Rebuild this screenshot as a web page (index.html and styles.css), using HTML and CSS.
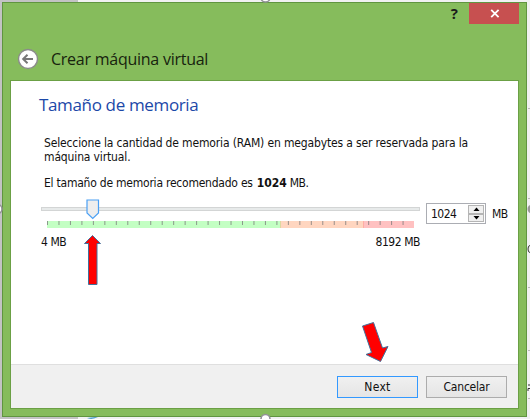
FILE: index.html
```html
<!DOCTYPE html>
<html lang="es">
<head>
<meta charset="utf-8">
<title>Crear máquina virtual</title>
<link rel="stylesheet" href="styles.css">
</head>
<body>
<div class="page-edge"></div>
<div class="window">
  <div class="titlebar"><span class="help">?</span>
    <div class="close"><svg width="10" height="9" viewBox="0 0 10 9"><path d="M1.2 .8 8.6 8.2M8.6 .8 1.2 8.2" stroke="#fff" stroke-width="1.8"/></svg></div>
  </div>
  <div class="header">
    <svg class="back" width="22" height="22" viewBox="0 0 22 22"><circle cx="11" cy="11" r="9.5" fill="#fff" stroke="#8b8b8b" stroke-width="1.4"/><path d="M16 11H6.5M10.5 6.8 6.2 11l4.3 4.2" fill="none" stroke="#777" stroke-width="2"/></svg>
    <span class="title">Crear máquina virtual</span>
  </div>
  <div class="content">
    <div class="pane">
      <h1>Tamaño de memoria</h1>
      <p><span class="l1">Seleccione la cantidad de memoria (RAM) en megabytes a ser reservada para la</span><br><span class="l2">máquina virtual.</span></p>
      <p class="rec"><span class="l3">El tamaño de memoria recomendado es</span> <b>1024</b> <span class="l4">MB.</span></p>
      <div class="controls">
        <div class="slider">
          <div class="track"></div>
          <svg class="handle" width="14" height="21" viewBox="0 0 14 21"><path d="M1 1h11.5v13L6.75 19.5 1 14z" fill="#eee" stroke="#4ba0f4" stroke-width="1.2"/></svg>
          <svg class="scale" width="368" height="7" viewBox="0 0 368 7"><path d="M0 0h234v7H0z" fill="#c3ffc3"/><path d="M233.500 0h83v7h-83z" fill="#ffd6c0"/><path d="M316.500 0H367v7h-50.500z" fill="#ffc1c1"/><path d="M233.500 0v7" stroke="#ddd8a0"/><path d="M316.500 0v7" stroke="#ffaea5"/><path d="M0 2H367" stroke="#777" stroke-opacity=".75" stroke-width="4" stroke-dasharray="1 10.470"/></svg>
          <div class="limits"><span class="min">4 MB</span><span class="max">8192 MB</span></div>
        </div>
        <div class="spin"><span class="value">1024</span>
          <div class="steps"><i><svg width="7" height="4"><path d="M.5 4 3.500 .5 6.500 4z"/></svg></i><i><svg width="7" height="4"><path d="M.5 0 3.500 3.500 6.500 0z"/></svg></i></div>
        </div>
        <span class="unit">MB</span>
      </div>
    </div>
    <div class="footer"><div class="button primary"><span class="next">Next</span></div><div class="button"><span class="cancel">Cancelar</span></div></div>
  </div>
</div>
<svg class="marks" width="530" height="419" viewBox="0 0 530 419">
  <path d="M92.500 235.500 100.500 243.500H97V284.500H88.500V243.500H84.500z" fill="#f00" stroke="#41719c"/>
  <path d="M362.500 326 373.500 322.500 382.500 348 388 346.500 380.500 361.500 366 354.500 371.500 352.500z" fill="#f00" stroke="#41719c"/>
  <g fill="#fff" stroke="#929296" stroke-width="1.600"><circle cx="265.500" cy="-2.500" r="4.500"/><circle cx="265.500" cy="419" r="4.500"/><circle cx="-2.500" cy="209" r="4.500"/></g>
  <circle cx="532" cy="209" r="4.500" fill="#999"/>
  <path d="M528 108.500h2M528 198.500h2M528 287.500h2M528 350.500h2M528 398.500h2" stroke="#bbb"/>
  <path d="M87 418q5 2 11-1z" fill="#1686c4"/>
  <path d="M530 245.500q-2 0-2 3.500t2 3.500M528 385h2M528 391v-2.500h2" fill="none" stroke="#333"/>
</svg>
</body>
</html>
```
FILE: styles.css
```css
* { box-sizing: border-box; }
body { margin: 0; width: 530px; height: 419px; overflow: hidden; position: relative; background: #f1f1f2; padding: 2px; font: 12px/14px "DejaVu Sans Condensed", "DejaVu Sans", sans-serif; color: #111; }
.page-edge { position: absolute; left: 0; top: 0; width: 78px; height: 419px; background: #c3c3c4; }
.window { position: relative; width: 525px; height: 415px; background: #86bc5c; border: 1px solid #609540; display: flex; flex-direction: column; padding: 0 7px 7px; }
.titlebar { height: 43px; display: flex; justify-content: flex-end; flex: none; }
.help { font: bold 15px/21px "Open Sans", sans-serif; margin-right: 11px; color: #1b1b1b; }
.close { width: 50px; height: 21px; background: #c75050; display: flex; align-items: center; justify-content: center; padding-left: 2px; }
.header { height: 34px; flex: none; display: flex; padding-left: 7px; }
.back { margin-top: 2px; flex: none; }
.title { font: 16px/22px "Open Sans", sans-serif; letter-spacing: -.25px; margin: 2px 0 0 12px; color: #17230e; }
.content { flex: 1; border: 1px solid #6ba045; background: #fff; display: flex; flex-direction: column; }
.pane { flex: 1; padding: 13px 10px 0 30px; }
h1 { margin: 0 0 0 -2px; font: 17px/22px "Open Sans", sans-serif; letter-spacing: -.35px; color: #1c48a8; }
p { margin: 20px 0 0 3px; white-space: nowrap; }
.l1 { letter-spacing: -.145px; }
.l2 { letter-spacing: -.14px; }
.l3 { letter-spacing: -.23px; }
.l4 { letter-spacing: -.5px; }
b { margin-left: .5px; }
b + .l4 { margin-left: -.5px; }
.rec { margin-top: 12px; }
.controls { display: flex; height: 60px; margin-top: 9px; }
.slider { width: 379px; position: relative; padding-top: 8px; }
.track { height: 4px; background: #e7eaea; border: 1px solid #d3d5d5; }
.handle { position: absolute; left: 45px; top: 0; }
.scale { display: block; margin: 10px 0 0 6px; }
.limits { display: flex; justify-content: space-between; margin-top: 7px; letter-spacing: -.45px; }
.spin { width: 60px; height: 21px; margin: 4px 0 0 6px; border: 1px solid #abadb3; display: flex; justify-content: space-between; padding: 1px 1px 1px 4px; }
.value { line-height: 19px; letter-spacing: -.5px; }
.steps { width: 16px; display: flex; flex-direction: column; }
.steps i { flex: 1; border: 1px solid #b5b5b5; background: #f0f0f0; display: flex; align-items: center; justify-content: center; }
.unit { margin: 8px 0 0 6px; letter-spacing: -.5px; }
.footer { height: 44px; flex: none; background: #f0f0f0; border-top: 1px solid #dfdfdf; display: flex; justify-content: flex-end; gap: 8px; padding: 11px 11px 0; }
.button { width: 81px; height: 22px; border: 1px solid #acacac; background: linear-gradient(#f0f0f0, #e5e5e5); text-align: center; line-height: 21px; }
.next { letter-spacing: .3px; }
.cancel { letter-spacing: -.2px; }
.primary { border-color: #3399ff; }
.marks { position: absolute; left: 0; top: 0; }
```
